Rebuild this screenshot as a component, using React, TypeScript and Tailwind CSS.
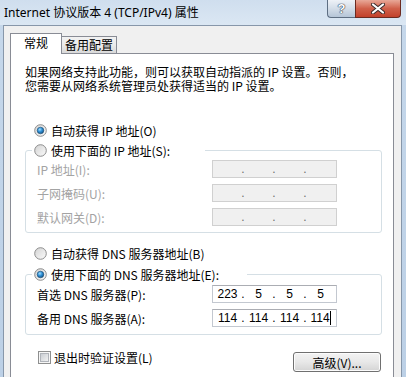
import React from 'react';

function Radio({ checked }: { checked?: boolean }) {
  return (
    <svg width="13" height="13" viewBox="0 0 13 13" className="shrink-0">
      <defs>
        <linearGradient id="radioFill" x1="0" y1="0" x2="1" y2="1">
          <stop offset="0" stopColor="#d2d2d2" />
          <stop offset="1" stopColor="#fcfcfc" />
        </linearGradient>
        <radialGradient id="radioDot" cx="0.4" cy="0.35" r="0.75">
          <stop offset="0" stopColor="#a6e0ff" />
          <stop offset="0.45" stopColor="#2d8fd6" />
          <stop offset="1" stopColor="#14466f" />
        </radialGradient>
      </defs>
      <circle cx="6.5" cy="6.5" r="5.8" fill="url(#radioFill)" stroke="#8c8c8c" strokeWidth="1" />
      {checked && <circle cx="6.5" cy="6.5" r="3.3" fill="url(#radioDot)" stroke="#1b4b72" strokeWidth="0.6" />}
    </svg>
  );
}

function Checkbox() {
  return (
    <svg width="13" height="13" viewBox="0 0 13 13" className="shrink-0">
      <defs>
        <linearGradient id="cbFill" x1="0" y1="0" x2="1" y2="1">
          <stop offset="0" stopColor="#c7cbd1" />
          <stop offset="1" stopColor="#f4f4f4" />
        </linearGradient>
      </defs>
      <rect x="0.5" y="0.5" width="12" height="12" fill="#f6f6f6" stroke="#8e8f8f" />
      <rect x="2.5" y="2.5" width="8" height="8" fill="url(#cbFill)" stroke="#b0b4ba" />
    </svg>
  );
}

function IpBox({ values, disabled, caret }: { values: string[]; disabled?: boolean; caret?: boolean }) {
  return (
    <div
      className={
        disabled
          ? "w-[125px] h-[18px] border border-[#d0d0d0] bg-[#f0f0f0] flex items-center pl-px font-['Liberation_Sans',sans-serif] text-[12px] leading-none text-[#6d6d6d]"
          : "w-[125px] h-[18px] border border-[#c3c8d0] border-t-[#abadb3] bg-white flex items-center pl-px font-['Liberation_Sans',sans-serif] text-[12px] leading-none text-black"
      }
    >
      {values.map((v, i) => (
        <React.Fragment key={i}>
          <div className="w-[27px] flex items-center justify-center">
            <span>{v}</span>
            {caret && i === 3 && <span className="w-px h-[14px] bg-black" />}
          </div>
          {i < 3 && <div className="w-[4px] text-center">.</div>}
        </React.Fragment>
      ))}
    </div>
  );
}

export default function App() {
  const cjk = "font-['Noto_Sans_CJK_SC',sans-serif]";
  return (
    <div className="w-[406px] h-[377px] overflow-hidden flex flex-col bg-gradient-to-b from-[#c6d8eb] to-[#bcd0e6]">
      {/* title bar */}
      <div className="h-[25px] shrink-0 flex items-start bg-gradient-to-b from-[#cfdeee] to-[#dbe7f3]">
        <div className={`pl-[4px] pt-[5px] text-[12px] leading-4 text-black font-['Noto_Sans','Noto_Sans_CJK_SC',sans-serif]`}>
          Internet 协议版本 4 (TCP/IPv4) 属性
        </div>
        <div className="ml-auto mr-[5px] flex">
          <div className="w-[28px] h-[18px] border border-t-0 border-r-0 border-[#5d6e82] rounded-bl-[4px] bg-gradient-to-b from-[#eef2f7] via-[#d3dde8] to-[#b5c5d7] flex items-center justify-center">
            <span className="text-[13px] font-bold leading-none text-white font-['Liberation_Sans',sans-serif] [text-shadow:0_0_1px_#2d3b4c,0_0_1px_#2d3b4c,0_0_1px_#2d3b4c]">?</span>
          </div>
          <div className="w-[46px] h-[18px] border border-t-0 border-[#6b2a20] rounded-br-[4px] bg-gradient-to-b from-[#e8a898] via-[#d0604a] to-[#c2402a] flex items-center justify-center">
            <svg width="14" height="11" viewBox="0 0 14 11">
              <path d="M2 1.5 L12 9.5 M12 1.5 L2 9.5" stroke="#3b2a2a" strokeWidth="4" strokeLinecap="round" />
              <path d="M2 1.5 L12 9.5 M12 1.5 L2 9.5" stroke="#ffffff" strokeWidth="2.2" strokeLinecap="round" />
            </svg>
          </div>
        </div>
      </div>

      {/* client area */}
      <div className={`ml-[3px] mr-[4px] flex-1 border border-[#8797aa] bg-[#f0f0f0] pt-[7px] pl-[6px] pr-[7px] ${cjk} text-[12px] leading-[13px]`}>
        {/* tabs */}
        <div className="flex items-end h-[20px]">
          <div className="relative z-10 w-[52px] h-[21px] -mb-px border border-b-0 border-[#898c95] bg-white flex justify-center pt-[2px] text-black">
            常规
          </div>
          <div className="w-[55px] h-[17px] border border-l-0 border-b-0 border-[#898c95] bg-gradient-to-b from-[#f2f2f2] via-[#ebebeb] to-[#d9d9d9] flex justify-center pt-[1px] text-black">
            备用配置
          </div>
        </div>

        {/* panel */}
        <div className="h-[340px] border border-[#898c95] bg-white pl-[14px] pt-[11px] text-black">
          <p className="leading-[14px]">
            如果网络支持此功能，则可以获取自动指派的 IP 设置。否则，
            <br />
            您需要从网络系统管理员处获得适当的 IP 设置。
          </p>

          <div className="mt-[30px] ml-[9px] h-[14px] flex items-center gap-[4px]">
            <Radio checked />
            <span>自动获得 IP 地址(O)</span>
          </div>

          <fieldset className="mt-[6px] w-[357px] border border-[#d5dfe5] rounded-[3px] pt-[3px] pb-[6px]">
            <legend className="ml-[6px] w-[173px] pl-[2px] h-[14px] flex items-center gap-[4px] bg-white">
              <Radio />
              <span>使用下面的 IP 地址(S):</span>
            </legend>
            <div className="pl-[11px] flex flex-col gap-[6px] text-[#a3a3a3]">
              <div className="flex items-center">
                <span className="w-[175px]">IP 地址(I):</span>
                <IpBox values={['', '', '', '']} disabled />
              </div>
              <div className="flex items-center">
                <span className="w-[175px]">子网掩码(U):</span>
                <IpBox values={['', '', '', '']} disabled />
              </div>
              <div className="flex items-center">
                <span className="w-[175px]">默认网关(D):</span>
                <IpBox values={['', '', '', '']} disabled />
              </div>
            </div>
          </fieldset>

          <div className="mt-[13px] ml-[9px] h-[14px] flex items-center gap-[4px]">
            <Radio />
            <span>自动获得 DNS 服务器地址(B)</span>
          </div>

          <fieldset className="mt-[7px] w-[357px] border border-[#d5dfe5] rounded-[3px] pt-[4px] pb-[7px]">
            <legend className="ml-[6px] w-[215px] pl-[2px] h-[14px] flex items-center gap-[4px] bg-white">
              <Radio checked />
              <span>使用下面的 DNS 服务器地址(E):</span>
            </legend>
            <div className="pl-[11px] flex flex-col gap-[6px]">
              <div className="flex items-center">
                <span className="w-[175px]">首选 DNS 服务器(P):</span>
                <IpBox values={['223', '5', '5', '5']} />
              </div>
              <div className="flex items-center">
                <span className="w-[175px]">备用 DNS 服务器(A):</span>
                <IpBox values={['114', '114', '114', '114']} caret />
              </div>
            </div>
          </fieldset>

          <div className="mt-[16px] w-[356px] flex items-start justify-between">
            <div className="ml-[13px] h-[13px] flex items-center gap-[3px]">
              <Checkbox />
              <span>退出时验证设置(L)</span>
            </div>
            <div className="mt-px w-[88px] h-[20px] border border-[#707070] rounded-[3px] bg-gradient-to-b from-[#f3f3f3] via-[#e8e8e8] to-[#d4d4d4] flex items-center justify-center shadow-[inset_0_0_0_1px_#fcfcfc]">
              高级(V)...
            </div>
          </div>
        </div>
      </div>
    </div>
  );
}
